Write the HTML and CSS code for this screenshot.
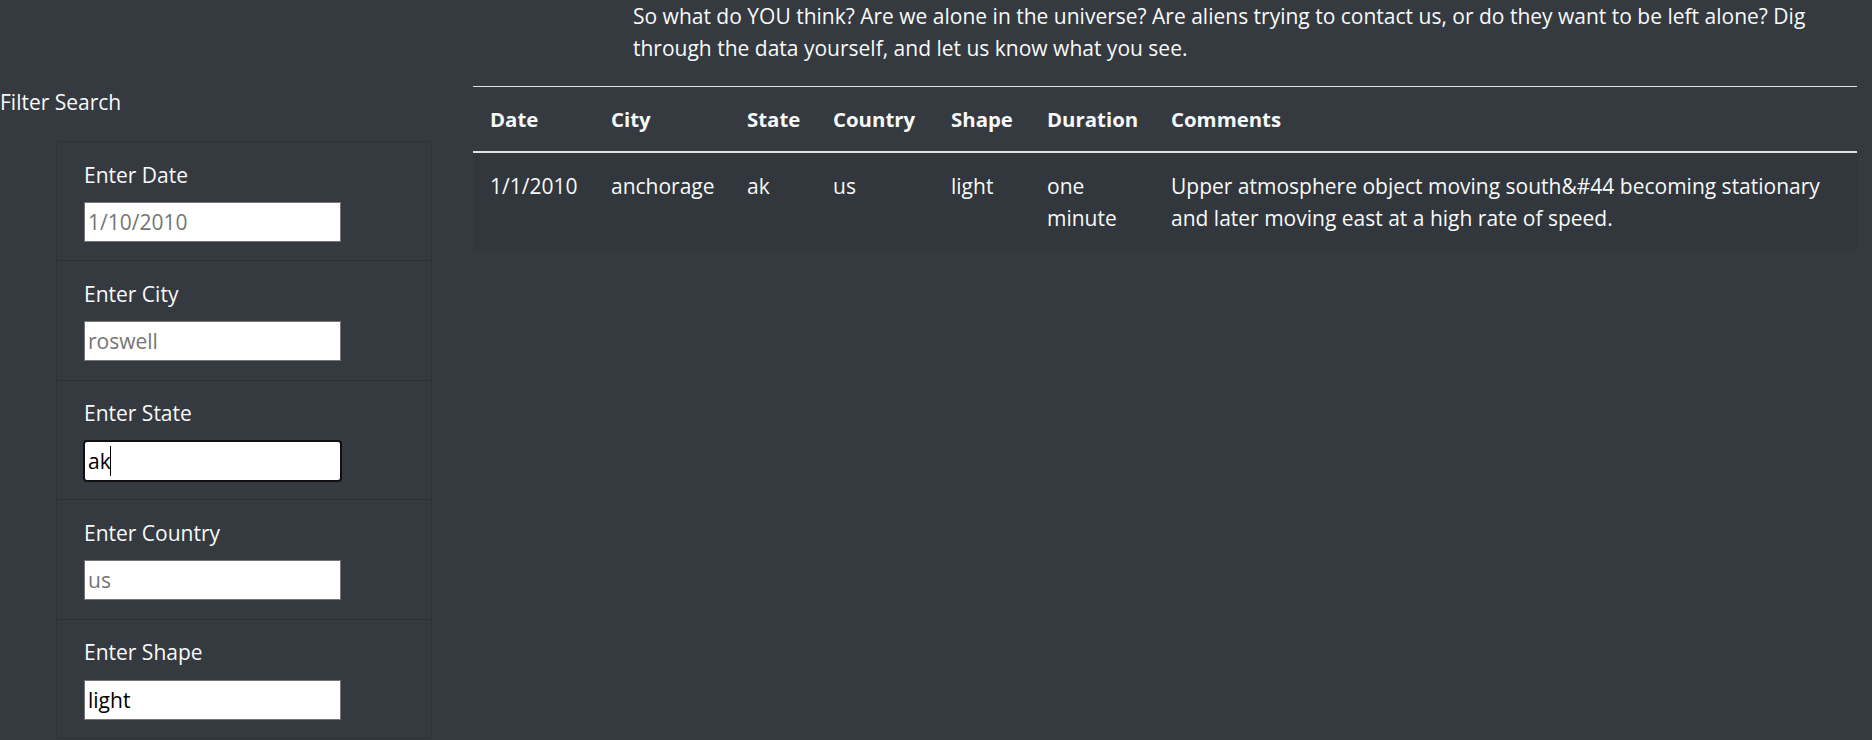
FILE: index.html
```html
<!DOCTYPE html>
<html lang="en">
<head>
<meta charset="utf-8">
<title>UFO Sightings</title>
<link rel="stylesheet" href="styles.css">
</head>
<body>
  <section class="intro">
    <p class="intro-text">So what do YOU think? Are we alone in the universe? Are aliens trying to contact us, or do they want to be left alone? Dig through the data yourself, and let us know what you see.</p>
  </section>
  <main class="main">
    <aside class="sidebar">
      <div class="sidebar-title">Filter Search</div>
      <ul class="filter-list">
        <li class="filter-item">
          <label class="filter-label" for="datetime">Enter Date</label>
          <input class="filter-input" id="datetime" type="text" placeholder="1/10/2010">
        </li>
        <li class="filter-item">
          <label class="filter-label" for="city">Enter City</label>
          <input class="filter-input" id="city" type="text" placeholder="roswell">
        </li>
        <li class="filter-item">
          <label class="filter-label" for="state">Enter State</label>
          <span class="focus-wrap">
            <input class="filter-input is-focused" id="state" type="text" placeholder="ca" value="ak">
            <span class="caret"></span>
          </span>
        </li>
        <li class="filter-item">
          <label class="filter-label" for="country">Enter Country</label>
          <input class="filter-input" id="country" type="text" placeholder="us">
        </li>
        <li class="filter-item">
          <label class="filter-label" for="shape">Enter Shape</label>
          <input class="filter-input" id="shape" type="text" placeholder="circle" value="light">
        </li>
      </ul>
    </aside>
    <section class="content">
      <table class="ufo-table">
        <thead>
          <tr>
            <th class="col-date">Date</th>
            <th class="col-city">City</th>
            <th class="col-state">State</th>
            <th class="col-country">Country</th>
            <th class="col-shape">Shape</th>
            <th class="col-duration">Duration</th>
            <th class="col-comments">Comments</th>
          </tr>
        </thead>
        <tbody>
          <tr>
            <td>1/1/2010</td>
            <td>anchorage</td>
            <td>ak</td>
            <td>us</td>
            <td>light</td>
            <td>one minute</td>
            <td>Upper atmosphere object moving south&amp;#44 becoming stationary and later moving east at a high rate of speed.</td>
          </tr>
        </tbody>
      </table>
    </section>
  </main>
</body>
</html>
```
FILE: styles.css
```css
* { box-sizing: border-box; }

html, body {
  margin: 0;
  padding: 0;
}

body {
  background: #343a40;
  color: #f8f9fa;
  font-family: "Open Sans", "Noto Sans", sans-serif;
  font-size: 21px;
  line-height: 32px;
  height: 740px;
  overflow: hidden;
}

.intro {
  padding-left: 633px;
  width: 1857px;
}

.intro-text {
  margin: 0 0 22px 0;
}

.main {
  display: flex;
  align-items: flex-start;
  padding-right: 15px;
}

.sidebar {
  width: 473px;
  flex: none;
}

.sidebar-title {
  margin-bottom: 23px;
}

.filter-list {
  list-style: none;
  margin: 0 0 0 56px;
  padding: 0;
  width: 376px;
  border: 1px solid rgba(0, 0, 0, 0.125);
  border-radius: 5px;
  background: #343a40;
}

.filter-item {
  padding: 16.5px 27px 16px;
  border-top: 1px solid rgba(0, 0, 0, 0.125);
}

.filter-item:first-child {
  border-top: 0;
}

.filter-label {
  display: block;
  margin-bottom: 11.5px;
}

.filter-input {
  display: block;
  width: 257px;
  height: 40px;
  margin: 0 0 2.4px 0;
  padding: 0 3px;
  border: 1px solid #767676;
  border-radius: 0;
  background: #fff;
  color: #000;
  font-family: "Open Sans", "Noto Sans", sans-serif;
  font-size: 21px;
  line-height: 32px;
}

.filter-input::placeholder {
  color: #757575;
  opacity: 1;
}

.filter-input:focus {
  outline: none;
}

.focus-wrap {
  position: relative;
  display: block;
  width: 257px;
}

.filter-input.is-focused {
  border-color: #fff;
  border-radius: 3px;
  outline: 2px solid #101010;
  outline-offset: -1px;
}

.caret {
  position: absolute;
  left: 26px;
  top: 5px;
  width: 1px;
  height: 30px;
  background: #000;
}

.content {
  flex: 1;
  min-width: 0;
}

.ufo-table {
  width: 100%;
  border-collapse: collapse;
  table-layout: fixed;
  color: #f8f9fa;
}

.ufo-table th {
  text-align: left;
  vertical-align: bottom;
  font-weight: 700;
  font-size: 20.4px;
  padding: 16px 17px;
  border-top: 1px solid #dee2e6;
  border-bottom: 2px solid #dee2e6;
  white-space: nowrap;
}

.ufo-table td {
  vertical-align: top;
  padding: 16.5px 17px 17px;
}

.ufo-table tbody tr:nth-of-type(odd) {
  background: rgba(0, 0, 0, 0.05);
}

.col-date { width: 121px; }
.col-city { width: 136px; }
.col-state { width: 86px; }
.col-country { width: 118px; }
.col-shape { width: 96px; }
.col-duration { width: 124px; }
.col-comments { width: auto; }
```
